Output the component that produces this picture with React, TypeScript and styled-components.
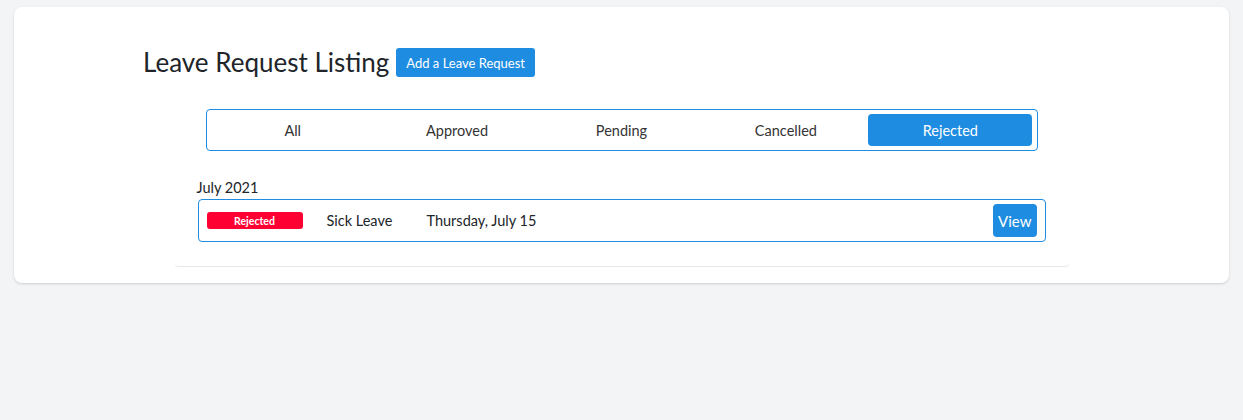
import React from "react";
import styled, { createGlobalStyle } from "styled-components";

const Global = createGlobalStyle`
  html, body { margin: 0; padding: 0; }
  body {
    background: #f3f4f6;
    font-family: Lato, "Noto Sans", sans-serif;
    color: #212529;
  }
`;

const Page = styled.div`
  padding: 7px 14px;
`;

const Card = styled.section`
  background: #fff;
  border-radius: 8px;
  box-shadow: 0 1px 3px rgba(0, 0, 0, 0.1), 0 1px 2px rgba(0, 0, 0, 0.06);
  padding: 41px 0 16px;
`;

const Header = styled.div`
  max-width: 957px;
  margin: 0 auto;
  display: flex;
  align-items: center;
  gap: 7px;
`;

const Title = styled.h1`
  margin: 0;
  font-size: 26px;
  font-weight: 400;
  color: #212529;
  line-height: 29px;
`;

const PrimaryButton = styled.button`
  background: #1e8ce1;
  color: #fff;
  border: none;
  border-radius: 3px;
  font-family: Lato, sans-serif;
  font-size: 13px;
  padding: 0 10px;
  height: 29px;
  cursor: pointer;
`;

const Panel = styled.div`
  width: 894px;
  margin: 32px auto 0;
  background: #fff;
  border-bottom: 1px solid #e5e7eb;
  border-radius: 0 0 4px 4px;
  padding: 0 0 24px;
`;

const Tabs = styled.div`
  margin: 0 31px;
  border: 1px solid #1e8ce1;
  border-radius: 4px;
  padding: 4px;
  display: grid;
  grid-template-columns: repeat(5, 1fr);
`;

const Tab = styled.button<{ $active?: boolean }>`
  height: 32px;
  border: none;
  border-radius: 4px;
  background: ${(p) => (p.$active ? "#1e8ce1" : "transparent")};
  color: ${(p) => (p.$active ? "#fff" : "#333")};
  font-family: Lato, sans-serif;
  font-size: 14.5px;
  cursor: pointer;
`;

const Month = styled.div`
  margin: 27px 0 1px 22px;
  font-size: 14.5px;
  line-height: 20px;
  color: #212529;
`;

const Row = styled.div`
  margin: 0 23px;
  border: 1px solid #1e8ce1;
  border-radius: 4px;
  padding: 4px 8px;
  display: flex;
  align-items: center;
  height: 33px;
`;

const Badge = styled.span`
  width: 96px;
  height: 17px;
  background: #ff0033;
  color: #fff;
  border-radius: 3px;
  font-size: 10.5px;
  font-weight: 700;
  display: inline-flex;
  align-items: center;
  justify-content: center;
  margin-right: 24px;
`;

const Cell = styled.span<{ $w?: number }>`
  font-size: 14.5px;
  color: #212529;
  width: ${(p) => (p.$w ? `${p.$w}px` : "auto")};
`;

const Spacer = styled.div`
  flex: 1;
`;

const ViewButton = styled(PrimaryButton)`
  height: 33px;
  padding: 0 5px;
  font-size: 15px;
  border-radius: 4px;
`;

const tabs = ["All", "Approved", "Pending", "Cancelled", "Rejected"];

export default function App() {
  return (
    <>
      <Global />
      <Page>
        <Card>
          <Header>
            <Title>Leave Request Listing</Title>
            <PrimaryButton>Add a Leave Request</PrimaryButton>
          </Header>
          <Panel>
            <Tabs>
              {tabs.map((t) => (
                <Tab key={t} $active={t === "Rejected"}>
                  {t}
                </Tab>
              ))}
            </Tabs>
            <Month>July 2021</Month>
            <Row>
              <Badge>Rejected</Badge>
              <Cell $w={100}>Sick Leave</Cell>
              <Cell>Thursday, July 15</Cell>
              <Spacer />
              <ViewButton>View</ViewButton>
            </Row>
          </Panel>
        </Card>
      </Page>
    </>
  );
}
